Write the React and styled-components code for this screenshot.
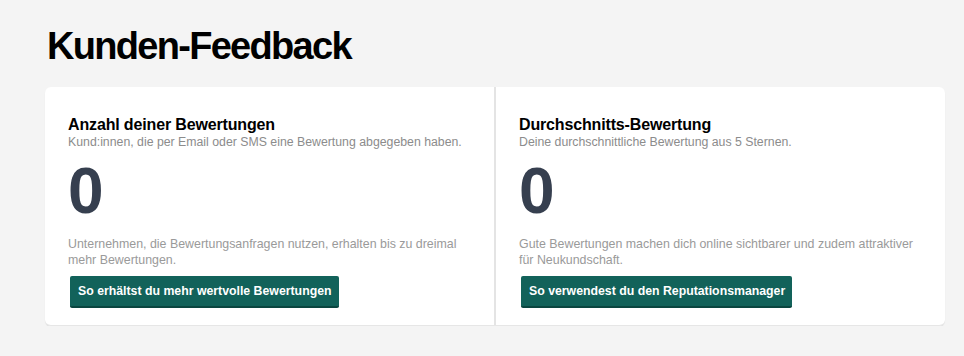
import React from "react";
import styled, { createGlobalStyle } from "styled-components";

const Global = createGlobalStyle`
  html, body { margin: 0; padding: 0; background: #f4f4f4; }
  body { font-family: "Liberation Sans", Arial, sans-serif; }
`;

const Page = styled.div`
  padding: 22px 19px 0 45px;
`;

const Title = styled.h1`
  margin: 0 0 0 2px;
  font-size: 38px;
  line-height: 48px;
  font-weight: 700;
  letter-spacing: -1.7px;
  color: #000;
`;

const Card = styled.div`
  margin-top: 17px;
  width: 900px;
  display: grid;
  grid-template-columns: 451px 1fr;
  background: #fff;
  border-radius: 6px;
  box-shadow: 0 1px 1px rgba(0, 0, 0, 0.08);
  border-bottom: 1px solid #e6e6e6;
`;

const Column = styled.section`
  padding: 28px 23px 17px 23px;
  display: flex;
  flex-direction: column;
  border-right: ${(p) => (p.$divider ? "2px solid #e4e4e4" : "none")};
`;

const Heading = styled.h2`
  margin: 0;
  font-size: 16px;
  line-height: 20px;
  font-weight: 700;
  letter-spacing: -0.15px;
  color: #000;
`;

const Sub = styled.p`
  margin: 0;
  font-size: 12.3px;
  line-height: 15px;
  color: #8c8c8c;
`;

const Big = styled.div`
  margin-top: 9px;
  font-size: 64px;
  line-height: 64px;
  font-weight: 700;
  color: #363f4f;
`;

const Desc = styled.p`
  margin: 13px 0 0;
  font-size: 12.4px;
  line-height: 16px;
  color: #9a9a9a;
`;

const Button = styled.button`
  margin: 8px 0 0 2px;
  align-self: flex-start;
  height: 32px;
  padding: 0 7px 0 8px;
  border: none;
  border-bottom: 2px solid #0a4640;
  border-radius: 2px;
  background: #12625a;
  color: #fff;
  font-family: "Liberation Sans", Arial, sans-serif;
  font-size: 12.3px;
  font-weight: 700;
  cursor: pointer;
`;

const items = [
  {
    title: "Anzahl deiner Bewertungen",
    sub: "Kund:innen, die per Email oder SMS eine Bewertung abgegeben haben.",
    value: "0",
    desc: "Unternehmen, die Bewertungsanfragen nutzen, erhalten bis zu dreimal mehr Bewertungen.",
    cta: "So erhältst du mehr wertvolle Bewertungen",
  },
  {
    title: "Durchschnitts-Bewertung",
    sub: "Deine durchschnittliche Bewertung aus 5 Sternen.",
    value: "0",
    desc: "Gute Bewertungen machen dich online sichtbarer und zudem attraktiver für Neukundschaft.",
    cta: "So verwendest du den Reputationsmanager",
  },
];

export default function App() {
  return (
    <>
      <Global />
      <Page>
        <Title>Kunden-Feedback</Title>
        <Card>
          {items.map((it, i) => (
            <Column key={i} $divider={i === 0}>
              <Heading>{it.title}</Heading>
              <Sub>{it.sub}</Sub>
              <Big>{it.value}</Big>
              <Desc>{it.desc}</Desc>
              <Button>{it.cta}</Button>
            </Column>
          ))}
        </Card>
      </Page>
    </>
  );
}
